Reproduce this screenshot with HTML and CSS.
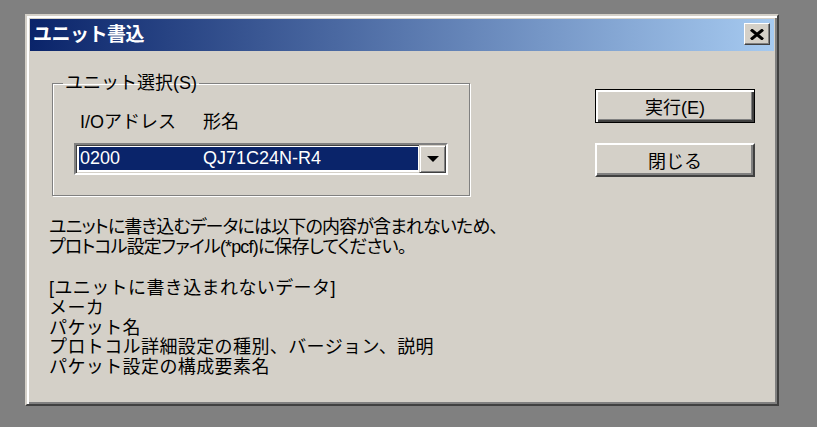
FILE: index.html
```html
<!DOCTYPE html>
<html lang="ja">
<head>
<meta charset="utf-8">
<title>ユニット書込</title>
<link rel="stylesheet" href="styles.css">
</head>
<body>
<div class="desktop">
  <div class="dialog">
    <div class="titlebar">
      <span class="title">ユニット書込</span>
      <button class="close" aria-label="閉じる">
        <svg width="14" height="11" viewBox="0 0 14 11"><path d="M1 0.5 L13 10.5 M13 0.5 L1 10.5" stroke="#000" stroke-width="3" fill="none"/></svg>
      </button>
    </div>
    <div class="content">
      <div class="top">
        <fieldset class="group">
          <legend>ユニット選択(S)</legend>
          <div class="cols"><span class="col-addr">I/Oアドレス</span><span>形名</span></div>
          <div class="combo">
            <div class="combo-sel"><span class="sel-addr">0200</span><span>QJ71C24N-R4</span></div>
            <div class="combo-btn">
              <svg width="12" height="6" viewBox="0 0 12 6"><path d="M0 0 H12 L6 6 Z" fill="#000"/></svg>
            </div>
          </div>
        </fieldset>
        <div class="buttons">
          <button class="btn default">実行(E)</button>
          <button class="btn">閉じる</button>
        </div>
      </div>
      <p class="msg">ユニットに書き込むデータには以下の内容が含まれないため、<br>プロトコル設定ファイル(*pcf)に保存してください。</p>
      <p class="list">[ユニットに書き込まれないデータ]<br>メーカ<br>パケット名<br>プロトコル詳細設定の種別、バージョン、説明<br>パケット設定の構成要素名</p>
    </div>
  </div>
</div>
</body>
</html>
```

FILE: styles.css
```css
html, body {
  margin: 0;
  padding: 0;
  background: #ffffff;
}

body {
  font-family: "Liberation Sans", "Noto Sans CJK JP", sans-serif;
  font-size: 18px;
  color: #000;
}

.desktop {
  width: 817px;
  height: 427px;
  background: #808080;
  box-sizing: border-box;
  padding: 14px 0 0 25px;
}

.dialog {
  width: 754px;
  height: 392px;
  box-sizing: border-box;
  background: #d4d0c8;
  border: 2px solid;
  border-color: #d4d0c8 #404040 #404040 #d4d0c8;
  box-shadow: inset 2px 2px 0 #ffffff, inset -2px -2px 0 #808080;
  padding: 3px;
  display: flex;
  flex-direction: column;
}

.titlebar {
  height: 32px;
  background: linear-gradient(to right, #0a246a 0%, #a6caf0 100%);
  display: flex;
  justify-content: space-between;
  align-items: flex-start;
  padding: 0 4px 0 3px;
}

.title {
  color: #ffffff;
  font-weight: bold;
  font-size: 19px;
  line-height: 32px;
  letter-spacing: -0.5px;
}

.close {
  margin: 4px 0 0 0;
  width: 26px;
  height: 22px;
  padding: 0;
  background: #d4d0c8;
  border: 1px solid;
  border-color: #ffffff #404040 #404040 #ffffff;
  box-shadow: inset -1px -1px 0 #808080, inset 1px 1px 0 #d4d0c8;
  display: flex;
  align-items: center;
  justify-content: center;
}

.content {
  padding: 22px 19px 0 19px;
}

.top {
  display: flex;
  justify-content: space-between;
  align-items: flex-start;
}

.group {
  margin: 0 0 0 3px;
  width: 418px;
  box-sizing: border-box;
  border: 1px solid #808080;
  box-shadow: 1px 1px 0 #ffffff, inset 1px 1px 0 #ffffff;
  padding: 0 0 20px 10px;
}

.group legend {
  padding: 0 2px;
  line-height: 20px;
  font-size: 18px;
}

.cols {
  margin: 19px 0 0 17px;
  line-height: 20px;
  display: flex;
}

.col-addr {
  width: 123px;
}

.combo {
  margin: 11px 0 0 11px;
  width: 374px;
  height: 32px;
  box-sizing: border-box;
  background: #ffffff;
  border: 2px solid;
  border-color: #808080 #ffffff #ffffff #808080;
  box-shadow: inset 1px 1px 0 #404040, inset -1px -1px 0 #d4d0c8;
  display: flex;
}

.combo-sel {
  flex: 1;
  margin: 2px 1px 3px 3px;
  background: #0a246a;
  color: #ffffff;
  line-height: 23px;
  font-size: 18px;
  display: flex;
  padding-left: 1px;
}

.sel-addr {
  width: 123px;
}

.combo-btn {
  width: 27px;
  height: 28px;
  box-sizing: border-box;
  background: #d4d0c8;
  border: 1px solid;
  border-color: #d4d0c8 #404040 #404040 #d4d0c8;
  box-shadow: inset 1px 1px 0 #ffffff, inset -1px -1px 0 #808080;
  display: flex;
  align-items: center;
  justify-content: center;
}

.buttons {
  margin-top: 16px;
  display: flex;
  flex-direction: column;
  gap: 20px;
}

.btn {
  width: 160px;
  height: 34px;
  box-sizing: border-box;
  padding: 0;
  font-family: inherit;
  font-size: 18px;
  color: #000;
  background: #d4d0c8;
  border: 2px solid;
  border-color: #ffffff #404040 #404040 #ffffff;
  box-shadow: inset -2px -2px 0 #808080;
}

.btn.default {
  border: 1px solid #000;
  box-shadow: inset 2px 2px 0 #ffffff, inset -2px -2px 0 #404040, inset -3px -3px 0 #808080;
}

.msg {
  margin: 22px 0 0 0;
  line-height: 19.5px;
  font-feature-settings: "palt";
  letter-spacing: -0.85px;
}

.list {
  margin: 22px 0 0 0;
  line-height: 19.75px;
  letter-spacing: 0.4px;
}
```
